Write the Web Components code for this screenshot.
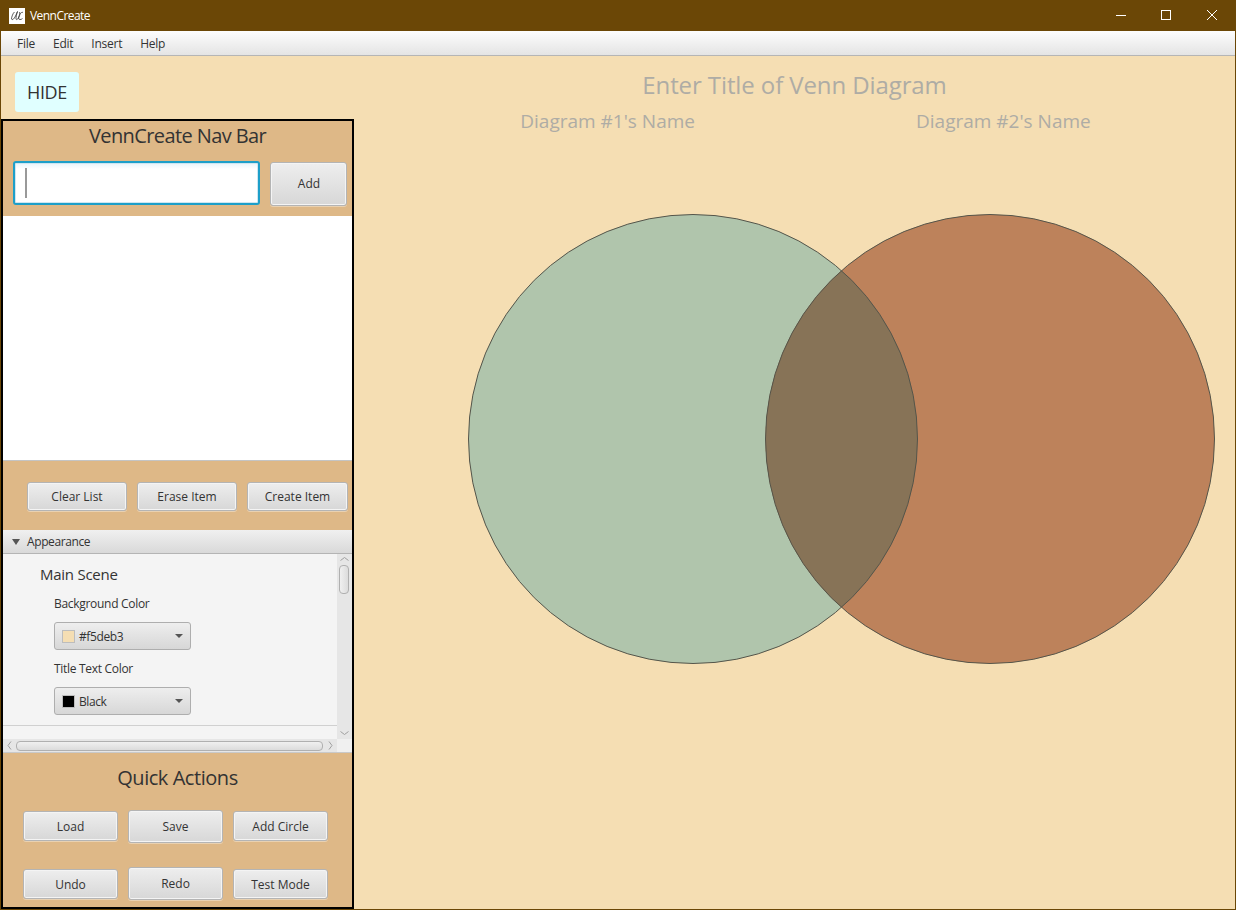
<!DOCTYPE html>
<html>
<head>
<meta charset="utf-8">
<title>VennCreate</title>
<style>
  html, body { margin: 0; height: 100%; }
  body { font-family: "Open Sans", "Noto Sans", sans-serif; color: #333; overflow: hidden; }
  .label { font-size: 12px; line-height: 16px; margin: 11px 0 0 51px; letter-spacing: -.3px; }
</style>
</head>
<body>
<venn-app>
  <venn-titlebar slot="top">VennCreate</venn-titlebar>
  <venn-menubar slot="top">
    <span>File</span><span>Edit</span><span>Insert</span><span>Help</span>
  </venn-menubar>
  <venn-navbar slot="side">
    <fx-button slot="add" style="width:77px;height:44px;margin-top:1px;padding:0 0 2px 1px">Add</fx-button>
    <fx-button slot="list-actions" style="width:100px">Clear List</fx-button>
    <fx-button slot="list-actions" style="width:100px">Erase Item</fx-button>
    <fx-button slot="list-actions" style="width:101px">Create Item</fx-button>
    <venn-titled-pane slot="pane" title="Appearance">
      <venn-scroll-pane>
        <div style="font-size:15px;line-height:20px;margin:10px 0 0 37px;letter-spacing:-.25px">Main Scene</div>
        <div class="label" style="margin-top:12px">Background Color</div>
        <fx-combo swatch="#f5deb3" style="margin:10px 0 0 51px">#f5deb3</fx-combo>
        <div class="label">Title Text Color</div>
        <fx-combo swatch="#000" style="margin:10px 0 0 51px">Black</fx-combo>
      </venn-scroll-pane>
    </venn-titled-pane>
    <fx-button slot="quick" style="height:30px;margin-top:1px;padding:0">Load</fx-button>
    <fx-button slot="quick" style="height:33px;padding-top:1px">Save</fx-button>
    <fx-button slot="quick" style="height:30px;margin-top:1px;padding:0">Add Circle</fx-button>
    <fx-button slot="quick" style="height:30px;margin-top:2px;padding:0">Undo</fx-button>
    <fx-button slot="quick" style="height:33px;padding-top:1px">Redo</fx-button>
    <fx-button slot="quick" style="height:30px;margin-top:2px;padding:0">Test Mode</fx-button>
  </venn-navbar>
  <venn-stage slot="main"></venn-stage>
</venn-app>
<script>
class VennApp extends HTMLElement {
  constructor() {
    super();
    this.attachShadow({mode: 'open'});
    this.shadowRoot.innerHTML = `
      <style>
        :host {
          display: flex;
          flex-direction: column;
          box-sizing: border-box;
          width: 1236px;
          height: 910px;
          border: solid #6b4706;
          border-width: 0 1px 1px 1px;
          background: #f5deb3;
          overflow: hidden;
        }
        #body { flex: 1; display: flex; min-height: 0; }
        #side { width: 353px; flex: none; display: flex; flex-direction: column; min-height: 0; }
        #hide {
          margin: 16px 0 7px 14px;
          width: 64px;
          height: 40px;
          padding-bottom: 1px;
          box-sizing: border-box;
          border-radius: 3px;
          background: #e0ffff;
          font-size: 18px;
          letter-spacing: -.4px;
          display: flex;
          align-items: center;
          justify-content: center;
        }
        #main { flex: 1; display: flex; min-width: 0; }
      </style>
      <slot name="top"></slot>
      <div id="body">
        <div id="side">
          <div id="hide">HIDE</div>
          <slot name="side"></slot>
        </div>
        <div id="main"><slot name="main"></slot></div>
      </div>
    `;
  }
}
customElements.define('venn-app', VennApp);

class VennTitlebar extends HTMLElement {
  constructor() {
    super();
    this.attachShadow({mode: 'open'});
    this.shadowRoot.innerHTML = `
      <style>
        :host {
          display: flex;
          align-items: center;
          height: 31px;
          background: #6b4706;
          color: #fff;
          font-size: 12px;
          letter-spacing: -.55px;
          flex: none;
        }
        #logo { width: 16px; height: 16px; margin: 0 5px 0 8px; background: #fff; display: block; }
        #text { flex: 1; }
        .ctl { width: 46px; height: 31px; display: block; }
      </style>
      <svg id="logo" viewBox="0 0 16 16" fill="none" stroke="#333" stroke-width=".8">
        <path d="M5.500 4C4 5 2.500 9 2.500 11C3 12.500 5 11 6 9C7 7 8 5 8.500 3.500C7.500 6 7 9 7 11C7.500 12.500 9 11 10 9C11 7 11 5 10.500 4"/>
        <path d="M14 4.500C12 3.500 10 7 9.500 10C9.500 12 12 12 13.500 10.500"/>
      </svg>
      <div id="text"><slot></slot></div>
      <svg class="ctl" viewBox="0 0 46 31" stroke="#fff" fill="none" stroke-width="1">
        <path d="M19 15.500H29"/>
      </svg>
      <svg class="ctl" viewBox="0 0 46 31" stroke="#fff" fill="none" stroke-width="1">
        <rect x="18.500" y="10.500" width="9" height="9"/>
      </svg>
      <svg class="ctl" viewBox="0 0 46 31" stroke="#fff" fill="none" stroke-width="1">
        <path d="M18 10L28 20M28 10L18 20"/>
      </svg>
    `;
  }
}
customElements.define('venn-titlebar', VennTitlebar);

class VennMenubar extends HTMLElement {
  constructor() {
    super();
    this.attachShadow({mode: 'open'});
    this.shadowRoot.innerHTML = `
      <style>
        :host {
          display: flex;
          align-items: center;
          gap: 18px;
          box-sizing: border-box;
          height: 25px;
          flex: none;
          padding: 1px 0 0 16px;
          font-size: 12px;
          letter-spacing: -.25px;
          background: linear-gradient(#fdfdfd, #e4e4e4);
          border-bottom: 1px solid #b5b5b5;
        }
      </style>
      <slot></slot>
    `;
  }
}
customElements.define('venn-menubar', VennMenubar);

class FxButton extends HTMLElement {
  constructor() {
    super();
    this.attachShadow({mode: 'open'});
    this.shadowRoot.innerHTML = `
      <style>
        :host {
          display: flex;
          align-items: center;
          justify-content: center;
          box-sizing: border-box;
          height: 29px;
          padding-bottom: 1px;
          font-size: 12px;
          color: #333;
          border: 1px solid #b4b4b4;
          border-radius: 3px;
          background: linear-gradient(#eeeeee, #d7d7d7);
          box-shadow: inset 0 0 0 1px #f4f4f4, 0 1px 0 rgba(255,255,255,.35);
        }
      </style>
      <slot></slot>
    `;
  }
}
customElements.define('fx-button', FxButton);

class FxCombo extends HTMLElement {
  constructor() {
    super();
    this.attachShadow({mode: 'open'});
    const color = this.getAttribute('swatch');
    this.shadowRoot.innerHTML = `
      <style>
        :host {
          display: flex;
          align-items: center;
          box-sizing: border-box;
          width: 137px;
          height: 28px;
          padding-left: 7px;
          font-size: 12px;
          letter-spacing: -.4px;
          border: 1px solid #aeaeae;
          border-radius: 3px;
          background: linear-gradient(#eeeeee, #d7d7d7);
        }
        #swatch { box-sizing: border-box; width: 13px; height: 13px; border: 1px solid #bdbdbd; margin-right: 4px; flex: none; }
        #label { flex: 1; }
        #arrow {
          width: 0; height: 0; margin-right: 7px;
          border: solid transparent;
          border-width: 4px 4px 0 4px;
          border-top-color: #555;
        }
      </style>
      <div id="swatch" style="background:${color}"></div>
      <div id="label"><slot></slot></div>
      <div id="arrow"></div>
    `;
  }
}
customElements.define('fx-combo', FxCombo);

class VennTitledPane extends HTMLElement {
  constructor() {
    super();
    this.attachShadow({mode: 'open'});
    this.shadowRoot.innerHTML = `
      <style>
        :host { display: flex; flex-direction: column; }
        #head {
          box-sizing: border-box;
          height: 24px;
          display: flex;
          align-items: center;
          padding-left: 9px;
          gap: 7px;
          font-size: 12px;
          letter-spacing: -.4px;
          background: linear-gradient(#f0f0f0, #d9d9d9);
          border-bottom: 1px solid #b4b4b4;
        }
        #tri {
          width: 0; height: 0;
          border: solid transparent;
          border-width: 6px 4px 0 4px;
          border-top-color: #555;
        }
      </style>
      <div id="head"><div id="tri"></div><span id="title"></span></div>
      <slot></slot>
    `;
    this.shadowRoot.querySelector('#title').textContent = this.getAttribute('title');
  }
}
customElements.define('venn-titled-pane', VennTitledPane);

class VennScrollPane extends HTMLElement {
  constructor() {
    super();
    this.attachShadow({mode: 'open'});
    this.shadowRoot.innerHTML = `
      <style>
        :host {
          display: grid;
          grid-template-columns: 334px 15px;
          grid-template-rows: 185px 14px;
          background: #f4f4f4;
        }
        #view { overflow: hidden; background: #f4f4f4; }
        #inner { height: 171px; overflow: hidden; border-bottom: 1px solid #d0d0d0; }
        #vbar, #hbar { background: #e6e6e6; display: flex; align-items: center; }
        #vbar { flex-direction: column; }
        #hbar { border-bottom: 1px solid #c9c9c9; }
        #corner { background: #f0f0f0; border-bottom: 1px solid #c9c9c9; }
        #vbar svg { width: 15px; height: 11px; flex: none; display: block; }
        #hbar svg { width: 13px; height: 13px; flex: none; display: block; }
        #hbar svg:last-child { width: 14px; }
        .vthumb {
          box-sizing: border-box;
          width: 10px; height: 29px; margin: 0 1px auto 0;
          border: 1px solid #b0b0b0; border-radius: 4px;
          background: linear-gradient(90deg, #f0f0f0, #dcdcdc);
        }
        .hthumb {
          box-sizing: border-box;
          flex: 1; height: 10px;
          border: 1px solid #b0b0b0; border-radius: 4px;
          background: linear-gradient(#f0f0f0, #dcdcdc);
        }
      </style>
      <div id="view"><div id="inner"><slot></slot></div></div>
      <div id="vbar">
        <svg viewBox="0 0 15 11" fill="none" stroke="#a0a0a0"><path d="M3.500 6.500L7.500 3.500L11.500 6.500"/></svg>
        <div class="vthumb"></div>
        <svg viewBox="0 0 15 11" fill="none" stroke="#a0a0a0"><path d="M3.500 3.500L7.500 6.500L11.500 3.500"/></svg>
      </div>
      <div id="hbar">
        <svg viewBox="0 0 13 13" fill="none" stroke="#a0a0a0"><path d="M8 2.500L5 6.500L8 10.500"/></svg>
        <div class="hthumb"></div>
        <svg viewBox="0 0 14 13" fill="none" stroke="#a0a0a0"><path d="M6 2.500L9 6.500L6 10.500"/></svg>
      </div>
      <div id="corner"></div>
    `;
  }
}
customElements.define('venn-scroll-pane', VennScrollPane);

class VennNavbar extends HTMLElement {
  constructor() {
    super();
    this.attachShadow({mode: 'open'});
    this.shadowRoot.innerHTML = `
      <style>
        :host {
          display: flex;
          flex-direction: column;
          flex: 1;
          min-height: 0;
          box-sizing: border-box;
          border: 2px solid #000;
          background: #deb887;
          overflow: hidden;
        }
        h2 { margin: 0; font-weight: 400; font-size: 20px; text-align: center; }
        #nav-title { height: 30px; line-height: 30px; margin-bottom: 10px; letter-spacing: -.6px; }
        #entry { display: flex; gap: 10px; padding: 0 5px 0 10px; height: 55px; flex: none; }
        #input {
          box-sizing: border-box;
          width: 247px; height: 44px;
          padding: 5px 0 0 10px;
          background: linear-gradient(#e8f4fa, #fff 6px);
          border: 2px solid #1d9fc9;
          border-radius: 3px;
          box-shadow: inset 0 0 0 1px #cfe6f1;
        }
        #caret { width: 2px; height: 30px; background: #999; }
        #list { height: 244px; flex: none; background: #fff; border-bottom: 1px solid #c4c4c4; }
        #list-actions { display: flex; gap: 10px; padding: 21px 0 19px 24px; flex: none; }
        #quick-title { height: 50px; line-height: 50px; letter-spacing: -.45px; }
        #quick { display: grid; grid-template-columns: repeat(3, 95px); gap: 24px 10px; padding: 7px 0 0 20px; align-items: start; }
      </style>
      <h2 id="nav-title">VennCreate Nav Bar</h2>
      <div id="entry">
        <div id="input"><div id="caret"></div></div>
        <slot name="add"></slot>
      </div>
      <div id="list"></div>
      <div id="list-actions"><slot name="list-actions"></slot></div>
      <slot name="pane"></slot>
      <h2 id="quick-title">Quick Actions</h2>
      <div id="quick"><slot name="quick"></slot></div>
    `;
  }
}
customElements.define('venn-navbar', VennNavbar);

class VennStage extends HTMLElement {
  constructor() {
    super();
    this.attachShadow({mode: 'open'});
    this.shadowRoot.innerHTML = `
      <style>
        :host {
          display: block;
          flex: 1;
          position: relative;
          color: #aeaca5;
        }
        #title { text-align: center; font-size: 24px; line-height: 32px; margin-top: 13px; letter-spacing: -.1px; }
        #names { display: flex; justify-content: center; gap: 221px; padding-left: 22px; font-size: 19px; line-height: 24px; margin-top: 8px; }
        svg { position: absolute; left: 0; top: 0; width: 881px; height: 853px; }
      </style>
      <div id="title">Enter Title of Venn Diagram</div>
      <div id="names"><span>Diagram #1's Name</span><span>Diagram #2's Name</span></div>
      <svg viewBox="354 56 881 853">
        <defs>
          <clipPath id="left-clip"><circle cx="693" cy="439" r="224.500"/></clipPath>
        </defs>
        <circle cx="693" cy="439" r="224.500" fill="#b0c5ac"/>
        <circle cx="990" cy="439" r="224.500" fill="#bd825b"/>
        <circle cx="990" cy="439" r="224.500" fill="#877357" clip-path="url(#left-clip)"/>
        <circle cx="693" cy="439" r="224.500" fill="none" stroke="#55554a" stroke-width="1"/>
        <circle cx="990" cy="439" r="224.500" fill="none" stroke="#55554a" stroke-width="1"/>
      </svg>
    `;
  }
}
customElements.define('venn-stage', VennStage);
</script>
</body>
</html>
